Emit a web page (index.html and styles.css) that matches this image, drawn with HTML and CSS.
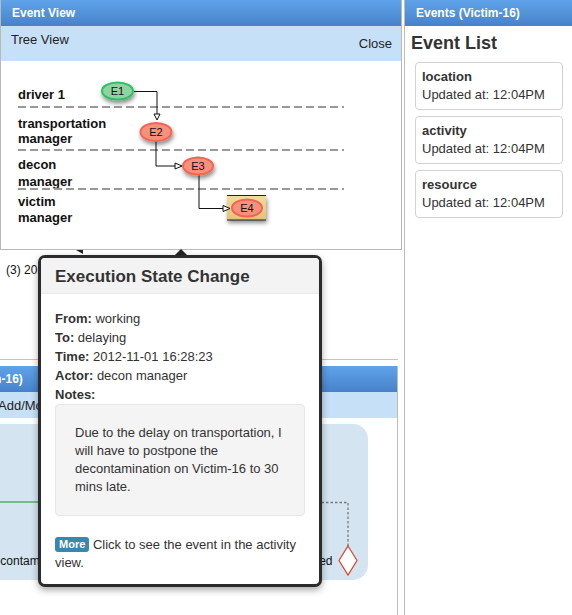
FILE: index.html
```html
<!DOCTYPE html>
<html>
<head>
<meta charset="utf-8">
<link rel="stylesheet" href="styles.css">
</head>
<body>
<div class="app">
  <div class="left">
    <section class="panel event-view">
      <div class="panel-head">Event View</div>
      <div class="subbar tree-bar"><span>Tree View</span><span class="close">Close</span></div>
      <div class="tree">
        <svg class="tree-svg" width="400" height="188" viewBox="1 61 400 188">
          <defs>
            <filter id="sh" x="-50%" y="-50%" width="200%" height="200%">
              <feDropShadow dx="1" dy="3" stdDeviation="2" flood-color="#000" flood-opacity="0.45"/>
            </filter>
            <linearGradient id="boxg" x1="0" y1="0" x2="0" y2="1">
              <stop offset="0" stop-color="#f2dc9e"/>
              <stop offset="1" stop-color="#e2c276"/>
            </linearGradient>
          </defs>
          <g class="lane-label">
            <text x="18" y="98.5">driver 1</text>
            <text x="18" y="127.5">transportation</text>
            <text x="18" y="143">manager</text>
            <text x="18" y="168.5">decon</text>
            <text x="18" y="185.5">manager</text>
            <text x="18" y="205.5">victim</text>
            <text x="18" y="221.5">manager</text>
          </g>
          <g class="lane-sep">
            <line x1="18" y1="107" x2="344" y2="107"/>
            <line x1="18" y1="150" x2="344" y2="150"/>
            <line x1="18" y1="189" x2="344" y2="189"/>
          </g>
          <g class="edge">
            <path d="M133 91.5 H157 V114"/>
            <path d="M156 141.5 V166 H175"/>
            <path d="M199 175 V208.5 H223"/>
          </g>
          <rect x="227" y="195.5" width="39" height="24.5" fill="url(#boxg)" filter="url(#sh)"/>
          <line x1="227" y1="195.5" x2="266" y2="195.5" class="box-edge"/>
          <line x1="227" y1="220" x2="266" y2="220" class="box-edge"/>
          <g class="arrow">
            <polygon points="154,114 160,114 157,120"/>
            <polygon points="175,163 175,169 182,166"/>
            <polygon points="223,205.5 223,211.5 230,208.5"/>
          </g>
          <ellipse cx="117.5" cy="91" rx="15.5" ry="8.5" class="node green" filter="url(#sh)"/>
          <ellipse cx="156" cy="132" rx="15.5" ry="9" class="node red" filter="url(#sh)"/>
          <ellipse cx="198" cy="166" rx="15" ry="8.5" class="node red" filter="url(#sh)"/>
          <ellipse cx="247" cy="208" rx="15" ry="8.5" class="node red"/>
          <g class="node-label">
            <text x="117.5" y="95">E1</text>
            <text x="156" y="136">E2</text>
            <text x="198" y="170">E3</text>
            <text x="247" y="212">E4</text>
          </g>
        </svg>
      </div>
    </section>

    <section class="under">(3) 2012-11-01</section>

    <section class="panel activity">
      <div class="panel-head clipped"><span class="shift-head">Activities (Victim-16)</span></div>
      <div class="subbar act-bar"><span class="shift-bar">Add/Modify</span></div>
      <div class="canvas">
        <div class="lane-box">
          <svg width="388" height="156" viewBox="-20 424 388 156">
            <line x1="-20" y1="502" x2="200" y2="502" class="flow"/>
            <text x="-13" y="565" class="act-text">decontam</text>
            <text x="332.5" y="565" class="act-text" text-anchor="end">completed</text>
            <path d="M290 502.5 H348 V546" class="dash"/>
            <polygon points="348,546 357,560.5 348,575 339,560.5" class="diamond"/>
          </svg>
        </div>
      </div>
    </section>

    <div class="popover">
      <span class="pop-arrow"></span>
      <span class="pop-wedge"></span>
      <div class="pop-head">Execution State Change</div>
      <div class="pop-body">
        <div class="field"><b>From:</b> working</div>
        <div class="field"><b>To:</b> delaying</div>
        <div class="field"><b>Time:</b> 2012-11-01 16:28:23</div>
        <div class="field"><b>Actor:</b> decon manager</div>
        <div class="field"><b>Notes:</b></div>
        <div class="notes">Due to the delay on transportation, I will have to postpone the decontamination on Victim-16 to 30 mins late.</div>
        <p class="more-line"><span class="badge">More</span> Click to see the event in the activity view.</p>
      </div>
    </div>
  </div>

  <aside class="right">
    <div class="panel-head">Events (Victim-16)</div>
    <h2 class="list-title">Event List</h2>
    <div class="card"><div class="card-title">location</div><div>Updated at: 12:04PM</div></div>
    <div class="card"><div class="card-title">activity</div><div>Updated at: 12:04PM</div></div>
    <div class="card"><div class="card-title">resource</div><div>Updated at: 12:04PM</div></div>
  </aside>
</div>
</body>
</html>
```
FILE: styles.css
```css
* { box-sizing: border-box; }
html, body { margin: 0; padding: 0; }
body {
  width: 572px;
  height: 615px;
  overflow: hidden;
  background: #fff;
  font-family: "Liberation Sans", Arial, Helvetica, sans-serif;
  color: #333;
}
.app { display: flex; height: 615px; }
.left { position: relative; width: 402px; flex: none; }
.right {
  flex: none;
  width: 168px;
  margin-left: 2px;
  border-left: 1px solid #bdbdbd;
}

.panel-head {
  height: 26px;
  line-height: 26px;
  padding-left: 11px;
  background: linear-gradient(#5fa3ea, #4782c9);
  color: #fff;
  font-weight: bold;
  font-size: 12px;
  white-space: nowrap;
}
.subbar {
  background: #c6e0f7;
  color: #222;
  font-size: 13px;
  white-space: nowrap;
}

/* Event view */
.event-view {
  width: 402px;
  height: 250px;
  border: 1px solid #b9b9b9;
  border-top: 0;
}
.tree-bar {
  height: 35px;
  display: flex;
  justify-content: space-between;
  align-items: flex-start;
  padding: 6px 9px 0 10px;
  line-height: 15px;
}
.tree-bar .close { margin-top: 4px; }
.tree { height: 188px; background: #fff; }
.tree-svg { display: block; }
.lane-label text {
  font-family: "Liberation Sans", Arial, sans-serif;
  font-weight: bold;
  font-size: 13px;
  fill: #111;
}
.lane-sep line { stroke: #999; stroke-width: 2; stroke-dasharray: 8 4; }
.edge path { fill: none; stroke: #111; stroke-width: 1; }
.arrow polygon { fill: #fff; stroke: #111; stroke-width: 1; }
.box-edge { stroke: #222; stroke-width: 1; }
.node.green { fill: #8ed3a0; stroke: #2cc066; stroke-width: 2; }
.node.red { fill: #f8907d; stroke: #f06652; stroke-width: 2; }
.node-label text {
  font-family: "Liberation Sans", Arial, sans-serif;
  font-size: 11px;
  fill: #111;
  text-anchor: middle;
}

/* Underlying list */
.under {
  width: 398px;
  height: 110px;
  border-bottom: 1px solid #c4c4c4;
  padding: 13px 0 0 6px;
  font-size: 12px;
  line-height: 15px;
  color: #111;
  white-space: nowrap;
  overflow: hidden;
}

/* Activity panel */
.activity {
  margin-top: 6px;
  width: 398px;
  height: 249px;
  border-right: 1px solid #bdbdbd;
  overflow: hidden;
}
.activity .panel-head { padding-left: 0; }
.shift-head { display: inline-block; margin-left: -95px; }
.act-bar { height: 26px; line-height: 28px; }
.shift-bar { display: inline-block; margin-left: -2px; }
.canvas { padding-top: 6px; background: #fff; }
.lane-box {
  margin-left: -20px;
  width: 388px;
  height: 156px;
  background: #d4e5f1;
  border-radius: 15px;
}
.lane-box svg { display: block; }
.flow { stroke: #239023; stroke-width: 1.2; }
.act-text { font-family: "Liberation Sans", Arial, sans-serif; font-size: 12px; fill: #111; }
.dash { fill: none; stroke: #777; stroke-width: 1.3; stroke-dasharray: 2.5 2; }
.diamond { fill: #fff; stroke: #d2452b; stroke-width: 1.2; }

/* Popover */
.popover {
  position: absolute;
  left: 38px;
  top: 255px;
  width: 284px;
  background: #fff;
  border: 3px solid #2b2b2b;
  border-radius: 7px;
  box-shadow: 0 3px 7px rgba(0, 0, 0, 0.35);
}
.pop-arrow {
  position: absolute;
  left: 134px;
  top: -9px;
  width: 0;
  height: 0;
  border-left: 6px solid transparent;
  border-right: 6px solid transparent;
  border-bottom: 6px solid #222;
}
.pop-wedge {
  position: absolute;
  left: 35px;
  top: -8px;
  width: 0;
  height: 0;
  border-top: 4px solid #222;
  border-left: 7px solid transparent;
}
.pop-head {
  height: 36px;
  line-height: 38px;
  padding-left: 14px;
  background: #f3f3f3;
  border-bottom: 1px solid #e9e9e9;
  border-radius: 4px 4px 0 0;
  font-weight: bold;
  font-size: 17px;
  color: #333;
}
.pop-body {
  padding: 15px 14px 12px 14px;
  font-size: 13px;
  color: #333;
}
.field { line-height: 19px; }
.notes {
  margin-top: 0;
  padding: 19px 19px;
  background: #f4f4f4;
  border: 1px solid #e6e6e6;
  border-radius: 4px;
  line-height: 18px;
}
.more-line { margin: 20px 0 0 0; line-height: 18px; }
.badge {
  display: inline-block;
  background: #3a87ad;
  color: #fff;
  font-weight: bold;
  font-size: 11px;
  line-height: 15px;
  padding: 0 4px;
  border-radius: 3px;
  vertical-align: 1px;
}

/* Right panel */
.list-title {
  margin: 6px 0 8px 0;
  padding-left: 6px;
  font-size: 18px;
  line-height: 22px;
  font-weight: bold;
  color: #333;
}
.card {
  margin: 0 0 6px 10px;
  width: 148px;
  height: 48px;
  padding: 5px 6px 0 6px;
  border: 1px solid #d2d2d2;
  border-radius: 4px;
  font-size: 13px;
  line-height: 18px;
  color: #333;
}
.card-title { font-weight: bold; }
```
